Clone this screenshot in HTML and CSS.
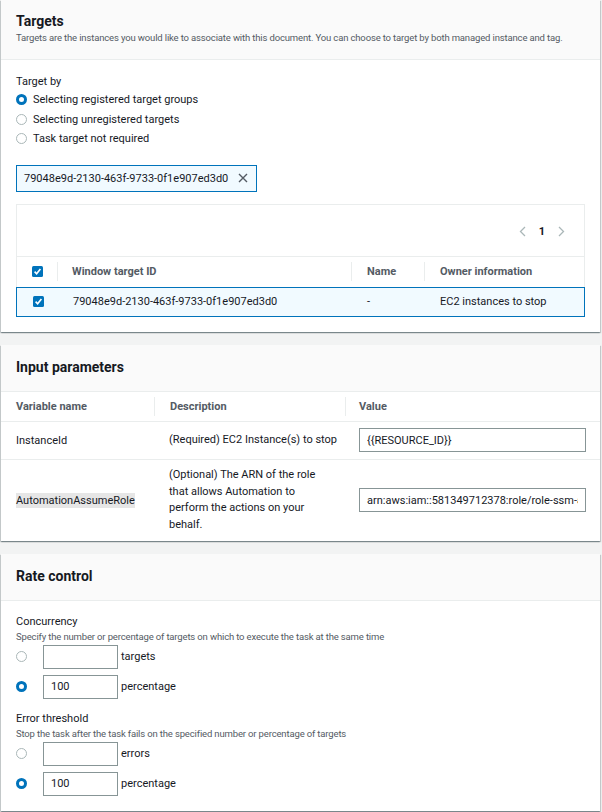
FILE: index.html
```html
<!DOCTYPE html>
<html lang="en">
<head>
    <meta charset="UTF-8">
    <meta name="viewport" content="width=device-width, initial-scale=1.0">
    <title>Register run command task</title>
    <link rel="stylesheet" href="styles.css">
</head>
<body>
    <div class="page">

        <!-- Targets -->
        <div class="panel">
            <div class="panel-header">
                <h2>Targets</h2>
                <p class="panel-desc">Targets are the instances you would like to associate with this document. You can choose to target by both managed instance and tag.</p>
            </div>
            <div class="panel-body">
                <div class="field-label">Target by</div>
                <div class="radio-list">
                    <label class="radio-row"><span class="radio checked"></span>Selecting registered target groups</label>
                    <label class="radio-row"><span class="radio"></span>Selecting unregistered targets</label>
                    <label class="radio-row"><span class="radio"></span>Task target not required</label>
                </div>

                <div class="token">
                    <span>79048e9d-2130-463f-9733-0f1e907ed3d0</span>
                    <svg class="token-close" width="10" height="10" viewBox="0 0 10 10">
                        <path d="M1 1 L9 9 M9 1 L1 9" stroke="#545b64" stroke-width="1.4" fill="none"/>
                    </svg>
                </div>

                <div class="target-table">
                    <div class="table-tools">
                        <div class="pager">
                            <svg width="7" height="11" viewBox="0 0 7 11"><path d="M6 1 L1.5 5.5 L6 10" stroke="#aab7b8" stroke-width="1.3" fill="none"/></svg>
                            <span class="pager-num">1</span>
                            <svg width="7" height="11" viewBox="0 0 7 11"><path d="M1 1 L5.5 5.5 L1 10" stroke="#aab7b8" stroke-width="1.3" fill="none"/></svg>
                        </div>
                    </div>
                    <div class="tt-row tt-head">
                        <div class="tt-check">
                            <svg width="11" height="11" viewBox="0 0 11 11"><rect width="11" height="11" rx="1.5" fill="#0073bb"/><path d="M2.6 5.6 L4.6 7.7 L8.4 2.9" stroke="#fff" stroke-width="1.6" fill="none"/></svg>
                        </div>
                        <div class="tt-cell tt-id sep">Window target ID</div>
                        <div class="tt-cell tt-name sep">Name</div>
                        <div class="tt-cell tt-owner sep">Owner information</div>
                    </div>
                    <div class="tt-row tt-selected">
                        <div class="tt-check">
                            <svg width="11" height="11" viewBox="0 0 11 11"><rect width="11" height="11" rx="1.5" fill="#0073bb"/><path d="M2.6 5.6 L4.6 7.7 L8.4 2.9" stroke="#fff" stroke-width="1.6" fill="none"/></svg>
                        </div>
                        <div class="tt-cell tt-id">79048e9d-2130-463f-9733-0f1e907ed3d0</div>
                        <div class="tt-cell tt-name">-</div>
                        <div class="tt-cell tt-owner">EC2 instances to stop</div>
                    </div>
                </div>
            </div>
        </div>

        <!-- Input parameters -->
        <div class="panel">
            <div class="panel-header">
                <h2>Input parameters</h2>
            </div>
            <div class="params">
                <div class="params-row params-head">
                    <div class="pcell">Variable name</div>
                    <div class="pcell sep">Description</div>
                    <div class="pcell sep">Value</div>
                </div>
                <div class="params-row">
                    <div class="pcell">InstanceId</div>
                    <div class="pcell pdesc nowrap">(Required) EC2 Instance(s) to stop</div>
                    <div class="pcell"><input class="text-input" type="text" value="{{RESOURCE_ID}}"></div>
                </div>
                <div class="params-row params-tall">
                    <div class="pcell"><span class="hl">AutomationAssumeRole</span></div>
                    <div class="pcell pdesc">(Optional) The ARN of the role that allows Automation to perform the actions on your behalf.</div>
                    <div class="pcell"><input class="text-input" type="text" value="arn:aws:iam::581349712378:role/role-ssm-automation"></div>
                </div>
            </div>
        </div>

        <!-- Rate control -->
        <div class="panel">
            <div class="panel-header">
                <h2>Rate control</h2>
            </div>
            <div class="panel-body rate-body">
                <div class="field-label">Concurrency</div>
                <div class="field-desc">Specify the number or percentage of targets on which to execute the task at the same time</div>
                <div class="rate-row">
                    <span class="radio"></span>
                    <input class="text-input small" type="text" value="">
                    <span class="unit">targets</span>
                </div>
                <div class="rate-row">
                    <span class="radio checked"></span>
                    <input class="text-input small" type="text" value="100">
                    <span class="unit">percentage</span>
                </div>

                <div class="field-label spaced">Error threshold</div>
                <div class="field-desc">Stop the task after the task fails on the specified number or percentage of targets</div>
                <div class="rate-row">
                    <span class="radio"></span>
                    <input class="text-input small" type="text" value="">
                    <span class="unit">errors</span>
                </div>
                <div class="rate-row">
                    <span class="radio checked"></span>
                    <input class="text-input small" type="text" value="100">
                    <span class="unit">percentage</span>
                </div>
            </div>
        </div>

    </div>
</body>
</html>
```

FILE: styles.css
```css
body {
    margin: 0;
    background: #f2f3f3;
    font-family: Roboto, "Liberation Sans", sans-serif;
    font-size: 11px;
    color: #16191f;
}
.page {
    padding: 0 2px 0 1px;
}
.panel {
    background: white;
    margin-bottom: 13px;
    box-shadow: 0 1px 1px 0 rgba(0,28,36,0.3), 1px 1px 1px 0 rgba(0,28,36,0.15), -1px 1px 1px 0 rgba(0,28,36,0.15);
}
.panel-header {
    background: #fafafa;
    border-bottom: 1px solid #eaeded;
    padding: 12px 15px 14px;
}
.panel:first-child .panel-header {
    padding-top: 11px;
}
.panel-header h2 {
    margin: 0;
    font-size: 14px;
    line-height: 20px;
    font-weight: bold;
}
.panel-desc {
    margin: 0;
    font-size: 9.5px;
    letter-spacing: -0.15px;
    line-height: 14px;
    color: #545b64;
    white-space: nowrap;
}
.panel-body {
    padding: 14px 15px 15px;
}
.rate-body {
    padding-top: 13px;
}
.field-label {
    line-height: 16px;
}
.field-label.spaced { margin-top: 12px; }
.field-desc {
    font-size: 9.5px;
    letter-spacing: -0.15px;
    line-height: 14px;
    color: #545b64;
}

/* radios */
.radio-row {
    display: flex;
    align-items: center;
    height: 19.5px;
}
.radio {
    box-sizing: border-box;
    width: 11px;
    height: 11px;
    border-radius: 50%;
    border: 1px solid #aab7b8;
    background: white;
    margin-right: 6px;
    flex-shrink: 0;
}
.radio.checked {
    border: 3.5px solid #0073bb;
}

/* selected target token */
.token {
    box-sizing: border-box;
    display: flex;
    align-items: center;
    justify-content: space-between;
    height: 27px;
    width: 241px;
    margin-top: 16px;
    padding: 0 8px 0 7px;
    border: 1px solid #0073bb;
    background: #f1faff;
}

/* registered targets table */
.target-table {
    margin-top: 12px;
    border: 1px solid #eaeded;
    border-bottom: none;
}
.table-tools {
    height: 51px;
    display: flex;
    justify-content: flex-end;
    align-items: center;
    border-bottom: 1px solid #eaeded;
}
.pager {
    display: flex;
    align-items: center;
    gap: 13px;
    padding-right: 19px;
    margin-top: 2px;
}
.pager-num { font-weight: bold; }
.tt-row {
    display: flex;
    align-items: center;
    height: 30px;
    box-sizing: border-box;
}
.tt-head {
    color: #545b64;
    font-weight: bold;
}
.tt-selected {
    background: #f1faff;
    border: 1px solid #0073bb;
    margin: 0 -1px;
    padding-left: 1px;
}
.tt-check {
    width: 40px;
    padding-left: 15px;
    box-sizing: border-box;
    display: flex;
}
.tt-cell {
    position: relative;
    box-sizing: border-box;
    padding-left: 15px;
}
.tt-id { width: 294px; }
.tt-name { width: 73px; }
.tt-owner { flex: 1; }
.sep::before {
    content: "";
    position: absolute;
    left: 0;
    top: -3px;
    bottom: -3px;
    border-left: 1px solid #eaeded;
}
.tt-head .tt-name, .tt-head .tt-owner { padding-left: 16px; }

/* input parameters */
.params-row {
    display: grid;
    grid-template-columns: 153px 191px 1fr;
    align-items: center;
    box-sizing: border-box;
    height: 38px;
    border-bottom: 1px solid #eaeded;
}
.params-row:last-child { border-bottom: none; }
.params-head {
    height: 30px;
    color: #545b64;
    font-weight: bold;
}
.params-tall { height: 81px; }
.pcell {
    position: relative;
    padding: 0 15px;
}
.params-head .pcell { padding-left: 16px; }
.params-head .pcell:first-child { padding-left: 15px; }
.params-row .pcell:last-child { padding: 0 14px 0 14px; }
.pdesc {
    line-height: 16.5px;
}
.pdesc.nowrap { white-space: nowrap; }
.hl {
    background: #e6e6e6;
    padding: 1px 0;
}

.text-input {
    box-sizing: border-box;
    width: 100%;
    height: 24px;
    border: 1px solid #879596;
    border-radius: 0;
    padding: 0 7px;
    font-family: Roboto, "Liberation Sans", sans-serif;
    font-size: 11px;
    color: #16191f;
    background: white;
    outline: none;
}

/* rate control */
.rate-row {
    display: flex;
    align-items: center;
    margin-top: 6px;
}
.field-desc + .rate-row { margin-top: 1px; }
.rate-row .radio {
    margin-right: 16px;
}
.text-input.small {
    width: 75px;
}
.unit {
    margin-left: 3px;
}
```
